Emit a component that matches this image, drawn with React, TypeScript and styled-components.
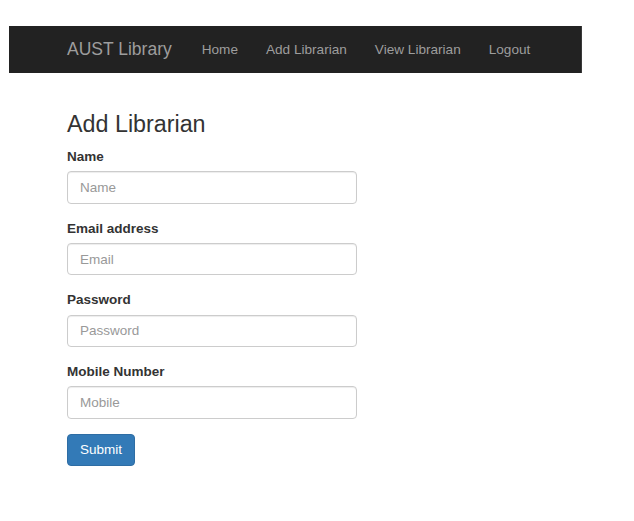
import React from "react";
import styled, { createGlobalStyle } from "styled-components";

const GlobalStyle = createGlobalStyle`
  html, body {
    margin: 0;
    padding: 0;
    background: #fff;
  }
  body {
    font-family: "Liberation Sans", Arial, sans-serif;
    color: #333;
  }
  * {
    box-sizing: border-box;
  }
`;

const Page = styled.div`
  padding: 26px 0 0 9px;
`;

const Navbar = styled.nav`
  display: flex;
  align-items: center;
  width: 573px;
  height: 47px;
  padding-left: 58px;
  background: #222;
  border-right: 1px solid #3a3a3a;
`;

const Brand = styled.a`
  font-size: 17.5px;
  color: #9d9d9d;
  text-decoration: none;
  margin-right: 16px;
`;

const NavLinks = styled.ul`
  display: flex;
  list-style: none;
  margin: 0;
  padding: 0;
`;

const NavLink = styled.a`
  display: block;
  padding: 0 14px;
  font-size: 13.6px;
  color: #9d9d9d;
  text-decoration: none;
`;

const Content = styled.main`
  width: 290px;
  margin: 39px 0 0 58px;
`;

const Title = styled.h3`
  margin: 0 0 10px;
  font-size: 23.3px;
  line-height: 25px;
  font-weight: 400;
  color: #333;
`;

const FormGroup = styled.div`
  margin-bottom: 15px;
`;

const Label = styled.label`
  display: block;
  font-size: 13.5px;
  line-height: 19.4px;
  font-weight: 700;
  margin-bottom: 4.8px;
`;

const Input = styled.input`
  display: block;
  width: 100%;
  height: 32.5px;
  padding: 0 12px;
  font-family: inherit;
  font-size: 13.5px;
  color: #555;
  background: #fff;
  border: 1px solid #ccc;
  border-radius: 4px;
  box-shadow: inset 0 1px 1px rgba(0, 0, 0, 0.075);
  &::placeholder {
    color: #999;
  }
`;

const Button = styled.button`
  display: block;
  height: 32px;
  width: 68px;
  padding: 0;
  font-family: inherit;
  font-size: 13.5px;
  color: #fff;
  background: #337ab7;
  border: 1px solid #2e6da4;
  border-radius: 4px;
`;

const fields = [
  { label: "Name", type: "text", placeholder: "Name" },
  { label: "Email address", type: "email", placeholder: "Email" },
  { label: "Password", type: "password", placeholder: "Password" },
  { label: "Mobile Number", type: "text", placeholder: "Mobile" },
];

const links = ["Home", "Add Librarian", "View Librarian", "Logout"];

const App = () => {
  return (
    <Page>
      <GlobalStyle />
      <Navbar>
        <Brand href="#">AUST Library</Brand>
        <NavLinks>
          {links.map((l) => (
            <li key={l}>
              <NavLink href="#">{l}</NavLink>
            </li>
          ))}
        </NavLinks>
      </Navbar>
      <Content>
        <Title>Add Librarian</Title>
        <form onSubmit={(e) => e.preventDefault()}>
          {fields.map((f) => (
            <FormGroup key={f.label}>
              <Label>{f.label}</Label>
              <Input type={f.type} placeholder={f.placeholder} />
            </FormGroup>
          ))}
          <Button type="submit">Submit</Button>
        </form>
      </Content>
    </Page>
  );
};

export default App;
